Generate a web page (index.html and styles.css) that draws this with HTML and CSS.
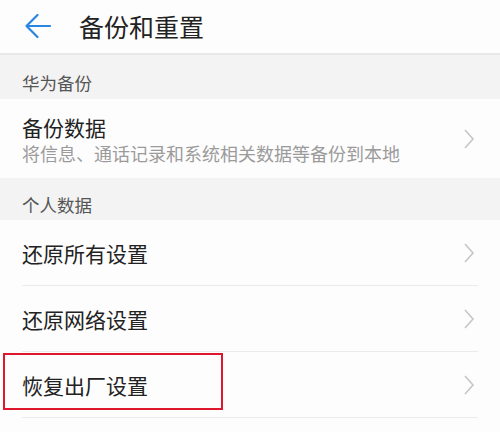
FILE: index.html
```html
<!DOCTYPE html>
<html lang="zh-CN">
<head>
<meta charset="utf-8">
<link rel="stylesheet" href="styles.css">
</head>
<body>
<header class="header">
  <svg class="back" width="26" height="26" viewBox="0 0 26 26">
    <path d="M1.5 13 H25 M12.5 2 L1.5 13 L12.5 24" fill="none" stroke="#2a86e0" stroke-width="2.2" stroke-linecap="round" stroke-linejoin="round"/>
  </svg>
  <h1 class="title">备份和重置</h1>
</header>
<div class="section first">华为备份</div>
<div class="row tall">
  <div class="texts">
    <div class="label">备份数据</div>
    <div class="sub">将信息、通话记录和系统相关数据等备份到本地</div>
  </div>
  <svg class="chev" width="12" height="20" viewBox="0 0 12 20"><polyline points="2,1 10,10 2,19" fill="none" stroke="#c6c6c6" stroke-width="1.6"/></svg>
</div>
<div class="section second">个人数据</div>
<div class="row line">
  <div class="label">还原所有设置</div>
  <svg class="chev" width="12" height="20" viewBox="0 0 12 20"><polyline points="2,1 10,10 2,19" fill="none" stroke="#c6c6c6" stroke-width="1.6"/></svg>
</div>
<div class="row line">
  <div class="label">还原网络设置</div>
  <svg class="chev" width="12" height="20" viewBox="0 0 12 20"><polyline points="2,1 10,10 2,19" fill="none" stroke="#c6c6c6" stroke-width="1.6"/></svg>
</div>
<div class="row line marked">
  <div class="label">恢复出厂设置</div>
  <svg class="chev" width="12" height="20" viewBox="0 0 12 20"><polyline points="2,1 10,10 2,19" fill="none" stroke="#c6c6c6" stroke-width="1.6"/></svg>
  <div class="highlight"></div>
</div>
</body>
</html>
```
FILE: styles.css
```css
* { box-sizing: border-box; }
html, body { margin: 0; padding: 0; }
body {
  background: #fdfdfd;
  font-family: "Noto Sans CJK SC", "Noto Sans", sans-serif;
  color: #222;
  width: 500px;
  height: 432px;
  overflow: hidden;
}
.header {
  height: 55px;
  display: flex;
  align-items: center;
  padding: 0 0 2px 25px;
  border-bottom: 2px solid #e8e8e8;
  background: #fdfdfd;
}
.back { display: block; }
.title {
  margin: 0 0 0 28px;
  font-size: 25px;
  font-weight: 400;
  line-height: 30px;
  color: #222;
}
.section {
  background: #f3f3f3;
  padding: 12px 0 0 22px;
  display: flex;
  align-items: center;
  font-size: 17.5px;
  color: #555;
  line-height: 24px;
}
.section.first { height: 44px; }
.section.second { height: 42px; }
.row {
  display: flex;
  align-items: center;
  justify-content: space-between;
  margin: 0 22px;
  padding-right: 3px;
  position: relative;
}
.row.tall { height: 79px; }
.row.line {
  height: 66px;
  border-bottom: 1px solid #ebebeb;
}
.label {
  font-size: 21px;
  line-height: 28px;
  color: #222;
}
.sub {
  font-size: 18px;
  line-height: 24px;
  color: #9b9b9b;
}
.chev { display: block; flex: none; }
.highlight {
  position: absolute;
  left: -19px;
  top: 1px;
  width: 220px;
  height: 57px;
  border: 2px solid #e0172c;
}
```
